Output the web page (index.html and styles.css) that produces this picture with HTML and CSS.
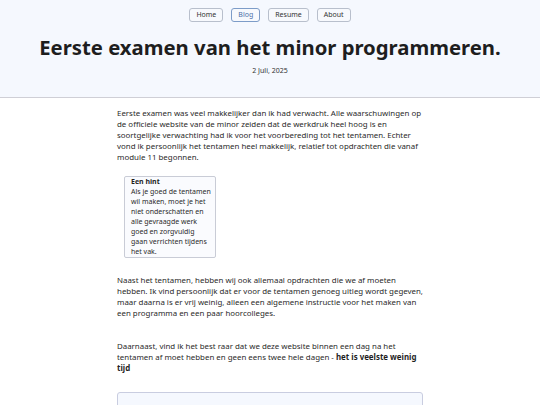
FILE: index.html
```html
<!DOCTYPE html>
<html lang="nl">
<head>
<meta charset="utf-8">
<title>Eerste examen van het minor programmeren.</title>
<link rel="stylesheet" href="styles.css">
</head>
<body>
<header class="header">
  <nav class="nav">
    <a class="nav-btn" href="#">Home</a>
    <a class="nav-btn active" href="#">Blog</a>
    <a class="nav-btn" href="#">Resume</a>
    <a class="nav-btn" href="#">About</a>
  </nav>
  <h1 class="title">Eerste examen van het minor programmeren.</h1>
  <p class="date">2 Juli, 2025</p>
</header>
<main class="content">
  <p class="para">Eerste examen was veel makkelijker dan ik had verwacht. Alle waarschuwingen op de officiele website van de minor zeiden dat de werkdruk heel hoog is en soortgelijke verwachting had ik voor het voorbereding tot het tentamen. Echter vond ik persoonlijk het tentamen heel makkelijk, relatief tot opdrachten die vanaf module 11 begonnen.</p>
  <aside class="hint">
    <strong class="hint-title">Een hint</strong>
    <p class="hint-text">Als je goed de tentamen wil maken, moet je het niet onderschatten en alle gevraagde werk goed en zorgvuldig gaan verrichten tijdens het vak.</p>
  </aside>
  <p class="para after-hint">Naast het tentamen, hebben wij ook allemaal opdrachten die we af moeten hebben. Ik vind persoonlijk dat er voor de tentamen genoeg uitleg wordt gegeven, maar daarna is er vrij weinig, alleen een algemene instructie voor het maken van een programma en een paar hoorcolleges.</p>
  <p class="para gap-top">Daarnaast, vind ik het best raar dat we deze website binnen een dag na het tentamen af moet hebben en geen eens twee hele dagen - <strong class="em">het is veelste weinig tijd</strong></p>
  <div class="box"></div>
</main>
</body>
</html>
```
FILE: styles.css
```css
* { box-sizing: border-box; }
html, body { margin: 0; padding: 0; }
body {
  font-family: "Noto Sans", "Open Sans", sans-serif;
  color: #222;
  background: #fff;
}
.header {
  background: #f5f8fe;
  border-bottom: 1px solid #cfcfd6;
  padding: 8px 0 0;
  height: 98px;
  text-align: center;
}
.nav {
  display: flex;
  justify-content: center;
  gap: 8px;
}
.nav-btn {
  display: inline-block;
  height: 14px;
  line-height: 12px;
  padding: 0 6px;
  font-size: 7px;
  color: #333;
  text-decoration: none;
  border: 1px solid #b8bfcc;
  border-radius: 3px;
  background: #f7f9fd;
}
.nav-btn.active {
  border-color: #7d9cc8;
  color: #4a6fa8;
}
.title {
  margin: 11px 0 0;
  font-size: 20.3px;
  line-height: 28px;
  font-weight: 700;
  color: #1e1e1e;
}
.date {
  margin: 5px 0 0;
  font-size: 7px;
  line-height: 10px;
  color: #333;
}
.content {
  width: 306px;
  margin: 0 auto;
  padding-top: 10px;
}
.para {
  margin: 0;
  font-size: 7.9px;
  line-height: 11px;
  color: #2a2a2a;
}
.para .em { font-weight: 700; font-size: 1em; line-height: 11px; color: #1e1e1e; }
.gap-top { margin-top: 22px; }
.after-hint { margin-top: 17px; }
.hint {
  width: 92px;
  margin: 13px 0 0 7px;
  padding: 0 3px 0 6px;
  border: 1px solid #c9ccd6;
  border-radius: 2px;
  background: #fafbfe;
  font-size: 7px;
  line-height: 10px;
  color: #2a2a2a;
}
.hint-title { display: block; font-weight: 700; color: #1e1e1e; }
.hint-text { margin: 0; }
.box {
  margin-top: 18px;
  height: 40px;
  border: 1px solid #c9cde0;
  border-radius: 3px;
  background: #f5f8fe;
}
```
